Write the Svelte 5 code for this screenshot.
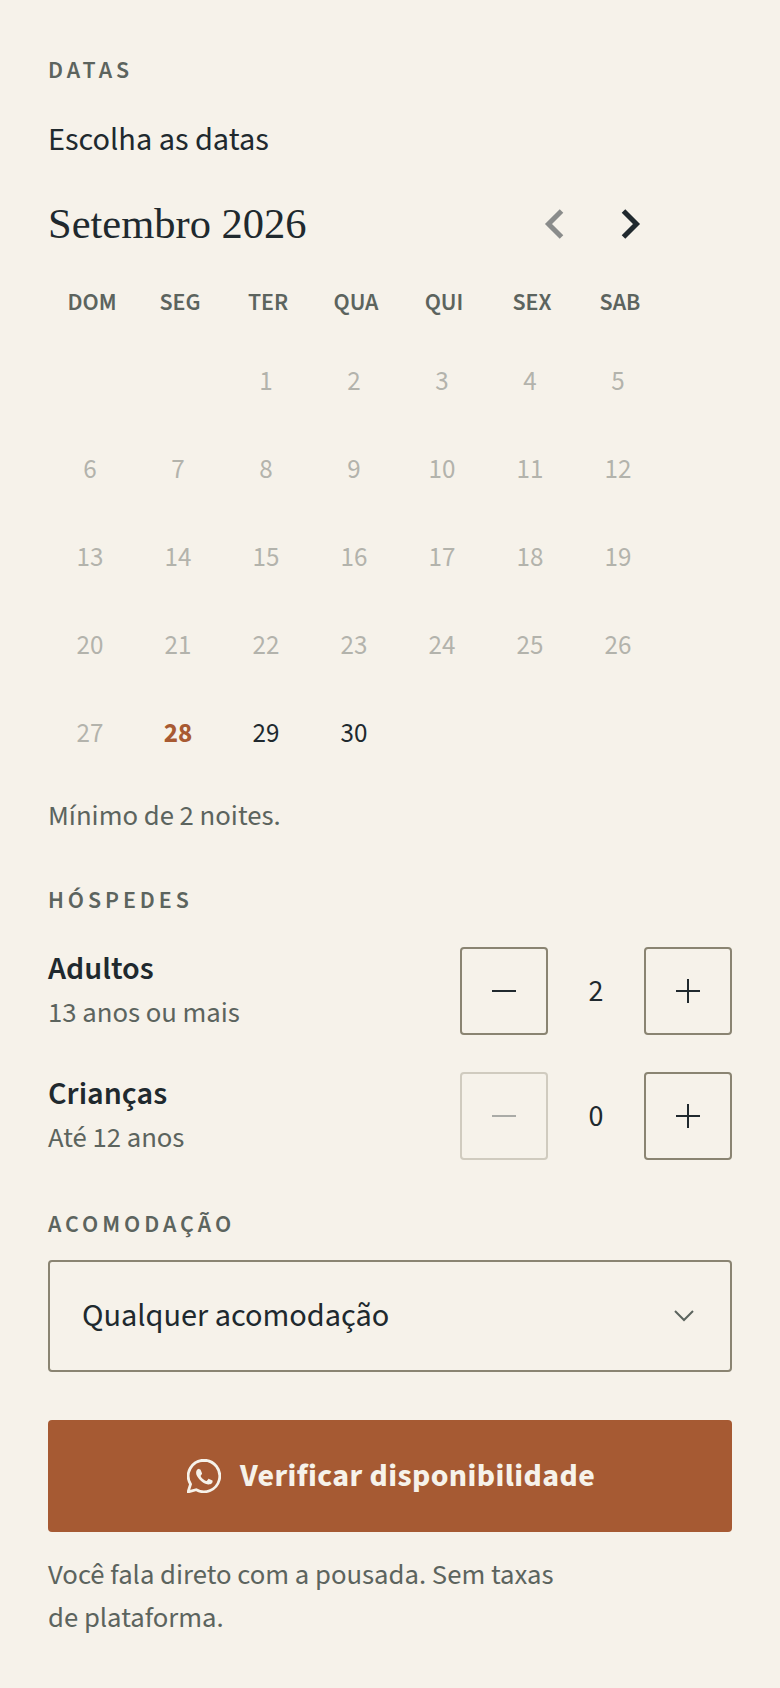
<script>
  const weekdays = ["DOM", "SEG", "TER", "QUA", "QUI", "SEX", "SAB"];
  // september 2026 starts on a tuesday
  const days = [null, null, ...Array.from({ length: 30 }, (_, i) => i + 1)];
  const today = 28;

  let adults = $state(2);
  let kids = $state(0);
</script>

<main class="page">
  <section class="dates">
    <h2 class="label">DATAS</h2>
    <p class="choose">Escolha as datas</p>

    <div class="calendar">
      <div class="cal-head">
        <span class="month">Setembro 2026</span>
        <div class="nav">
          <button class="arrow off" aria-label="Mês anterior">
            <svg viewBox="0 0 24 24" width="48" height="48"><path d="M15.250 5.500L8.750 12l6.500 6.500" /></svg>
          </button>
          <button class="arrow" aria-label="Próximo mês">
            <svg viewBox="0 0 24 24" width="48" height="48"><path d="M8.750 5.500L15.250 12l-6.500 6.500" /></svg>
          </button>
        </div>
      </div>

      <div class="weekdays">
        {#each weekdays as w}
          <span>{w}</span>
        {/each}
      </div>

      <div class="grid">
        {#each days as d}
          <span class="day" class:past={d && d < today} class:today={d === today}>{d ?? ""}</span>
        {/each}
      </div>
    </div>

    <p class="hint">Mínimo de 2 noites.</p>
  </section>

  <section class="guests">
    <h2 class="label">HÓSPEDES</h2>
    <div class="guest-row">
      <div class="who">
        <strong>Adultos</strong>
        <span>13 anos ou mais</span>
      </div>
      <div class="stepper">
        <button class="step" disabled={adults <= 1} onclick={() => adults--} aria-label="Menos adultos">
          <svg viewBox="0 0 24 24" width="24" height="24"><path d="M0 12h24" /></svg>
        </button>
        <span class="count">{adults}</span>
        <button class="step" onclick={() => adults++} aria-label="Mais adultos">
          <svg viewBox="0 0 24 24" width="24" height="24"><path d="M0 12h24M12 0v24" /></svg>
        </button>
      </div>
    </div>
    <div class="guest-row">
      <div class="who">
        <strong>Crianças</strong>
        <span>Até 12 anos</span>
      </div>
      <div class="stepper">
        <button class="step" disabled={kids <= 0} onclick={() => kids--} aria-label="Menos crianças">
          <svg viewBox="0 0 24 24" width="24" height="24"><path d="M0 12h24" /></svg>
        </button>
        <span class="count">{kids}</span>
        <button class="step" onclick={() => kids++} aria-label="Mais crianças">
          <svg viewBox="0 0 24 24" width="24" height="24"><path d="M0 12h24M12 0v24" /></svg>
        </button>
      </div>
    </div>
  </section>

  <section class="room">
    <h2 class="label">ACOMODAÇÃO</h2>
    <div class="select">
      <span>Qualquer acomodação</span>
      <svg viewBox="0 0 20 12" width="20" height="12"><path d="M1 1l9 9 9-9" /></svg>
    </div>
  </section>

  <button class="submit">
    <svg viewBox="1 1 22 22" width="34" height="34" class="wa">
      <path d="M12 1.800a10.200 10.200 0 0 0-8.700 15.500L1.700 22.300l5.300-1.400A10.200 10.200 0 1 0 12 1.800z" />
      <path class="fill" d="M8.800 7.300c-.3 0-.6.1-.9.4-.4.4-1 1-1 2.300s1 2.600 1.100 2.800c.1.200 1.900 2.900 4.500 4 2.200.9 2.700.7 3.200.6.500 0 1.500-.6 1.700-1.200.2-.5.2-1 .2-1.100-.1-.1-.3-.2-.5-.3l-1.800-.9c-.3-.1-.4-.1-.6.2l-.8 1c-.2.2-.3.200-.5.100-.3-.2-1.100-.4-2.100-1.300-.8-.7-1.300-1.500-1.400-1.800-.2-.3 0-.4.100-.5l.4-.5.300-.4c.1-.2 0-.4 0-.5l-.8-2c-.2-.5-.4-.4-.6-.4z" />
    </svg>
    Verificar disponibilidade
  </button>

  <p class="foot">Você fala direto com a pousada. Sem taxas<br />de plataforma.</p>
</main>

<style>
  :global(body) {
    margin: 0;
    background: #f6f2ea;
  }

  .page {
    box-sizing: border-box;
    width: 780px;
    padding: 57px 48px 0;
    font-family: "Source Sans 3", "Noto Sans", sans-serif;
    color: #20292e;
  }

  .label {
    margin: 0;
    font-size: 24px;
    line-height: 28px;
    font-weight: 600;
    letter-spacing: 0.165em;
    color: #5c645e;
  }

  .choose {
    margin: 35px 0 0;
    font-size: 32.300px;
    line-height: 40px;
  }

  .calendar {
    width: 616px;
    margin-top: 34px;
  }

  .cal-head {
    width: 606px;
    display: flex;
    justify-content: space-between;
    align-items: center;
    height: 60px;
  }

  .month {
    font-family: "Liberation Serif", serif;
    font-size: 42.500px;
    line-height: 56px;
  }

  .nav {
    display: flex;
    gap: 27px;
  }

  .arrow {
    padding: 0;
    border: none;
    background: none;
    display: flex;
  }

  .arrow path {
    fill: none;
    stroke: #20292e;
    stroke-width: 2.500;
  }

  .arrow.off {
    opacity: 0.5;
  }

  .weekdays,
  .grid {
    display: grid;
    grid-template-columns: repeat(7, 88px);
  }

  .weekdays {
    margin-top: 27px;
    font-size: 24px;
    line-height: 44px;
    font-weight: 600;
    color: #5c645e;
    text-align: center;
  }

  .grid {
    margin-top: 12px;
  }

  .day {
    height: 88px;
    padding-right: 4px;
    display: flex;
    align-items: center;
    justify-content: center;
    font-size: 27px;
    color: #20292e;
  }

  .day.past {
    color: #b3b3ac;
  }

  .day.today {
    color: #a85a32;
    font-weight: 700;
  }

  .hint {
    margin: 19px 0 0;
    font-size: 28.700px;
    line-height: 40px;
    color: #5c645e;
  }

  .guests {
    margin-top: 51px;
  }

  .guest-row {
    display: flex;
    justify-content: space-between;
    align-items: center;
    margin-top: 32px;
  }

  .guest-row + .guest-row {
    margin-top: 37px;
  }

  .who {
    display: flex;
    flex-direction: column;
  }

  .who strong {
    font-size: 32.300px;
    line-height: 44px;
    font-weight: 600;
  }

  .who span {
    font-size: 28.700px;
    line-height: 44px;
    color: #5c645e;
  }

  .stepper {
    display: flex;
    align-items: center;
  }

  .step {
    width: 88px;
    height: 88px;
    padding: 0;
    display: flex;
    align-items: center;
    justify-content: center;
    background: none;
    border: 2px solid #8a8472;
    border-radius: 4px;
  }

  .step path {
    fill: none;
    stroke: #20292e;
    stroke-width: 2;
  }

  .step:disabled {
    opacity: 0.35;
  }

  .count {
    width: 96px;
    text-align: center;
    font-size: 30px;
  }

  .room {
    margin-top: 51px;
  }

  .select {
    box-sizing: border-box;
    margin-top: 21px;
    height: 112px;
    padding: 0 36px 0 32px;
    display: flex;
    align-items: center;
    justify-content: space-between;
    border: 2px solid #8a8472;
    border-radius: 4px;
    font-size: 32.300px;
  }

  .select path {
    fill: none;
    stroke: #5c645e;
    stroke-width: 2;
  }

  .submit {
    width: 100%;
    height: 112px;
    margin-top: 48px;
    padding: 0 0 0 2px;
    display: flex;
    align-items: center;
    justify-content: center;
    gap: 19px;
    border: none;
    border-radius: 4px;
    background: #a65a33;
    color: #f6f2ea;
    font-family: inherit;
    font-size: 32px;
    letter-spacing: 0.012em;
    font-weight: 700;
  }

  .wa path {
    fill: none;
    stroke: #f6f2ea;
    stroke-width: 1.800;
  }

  .wa path.fill {
    fill: #f6f2ea;
    stroke: none;
  }

  .foot {
    margin: 22px 0 0;
    font-size: 28.700px;
    line-height: 43px;
    color: #5c645e;
  }
</style>
